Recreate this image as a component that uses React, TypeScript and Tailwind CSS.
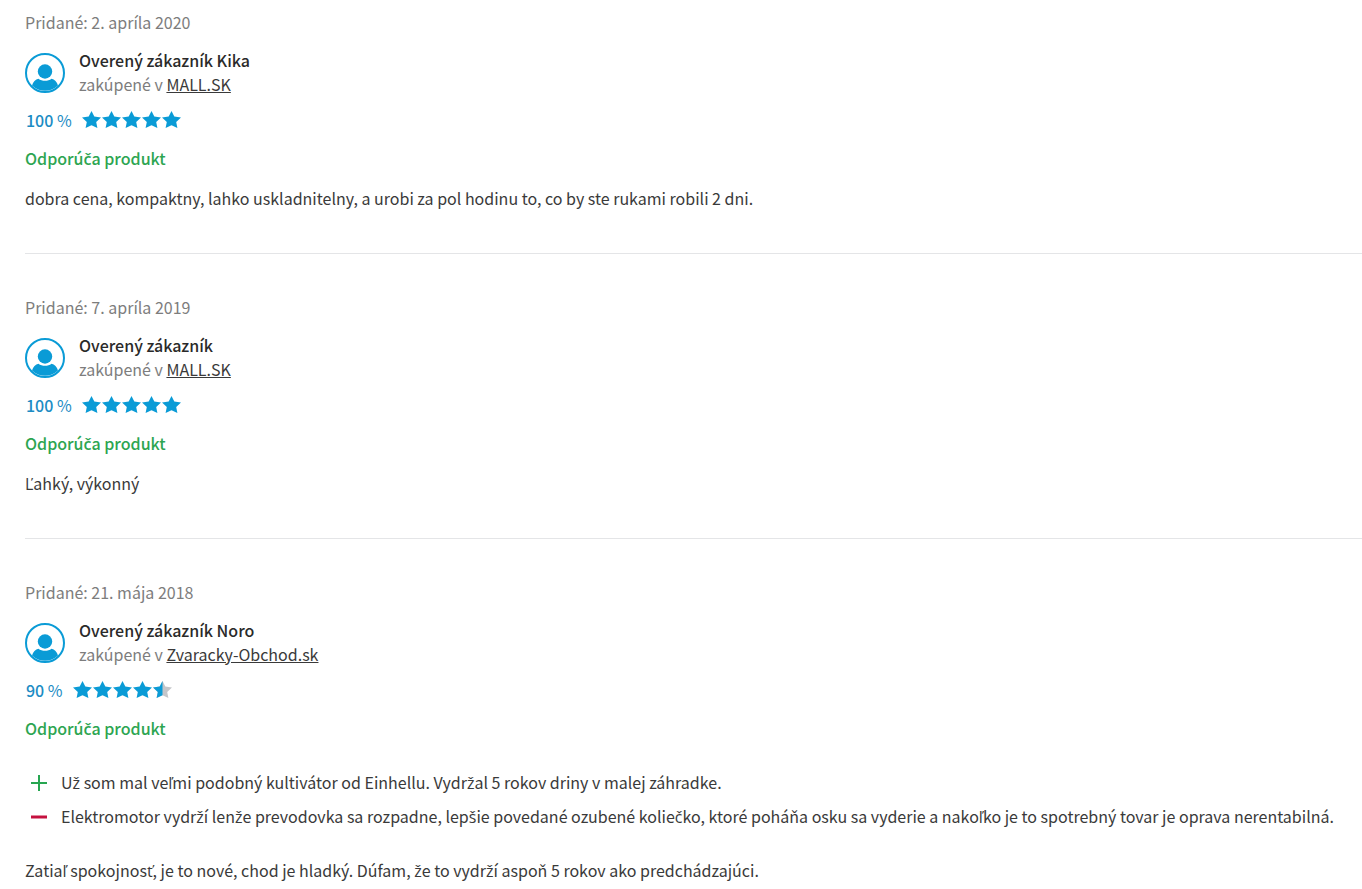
type Review = {
  id: number;
  added: string;
  author: string;
  shop: string;
  rating: number;
  pros?: string[];
  cons?: string[];
  text: string;
};

const reviews: Review[] = [
  {
    id: 1,
    added: "2. apríla 2020",
    author: "Overený zákazník Kika",
    shop: "MALL.SK",
    rating: 100,
    text: "dobra cena, kompaktny, lahko uskladnitelny, a urobi za pol hodinu to, co by ste rukami robili 2 dni.",
  },
  {
    id: 2,
    added: "7. apríla 2019",
    author: "Overený zákazník",
    shop: "MALL.SK",
    rating: 100,
    text: "Ľahký, výkonný",
  },
  {
    id: 3,
    added: "21. mája 2018",
    author: "Overený zákazník Noro",
    shop: "Zvaracky-Obchod.sk",
    rating: 90,
    pros: [
      "Už som mal veľmi podobný kultivátor od Einhellu. Vydržal 5 rokov driny v malej záhradke.",
    ],
    cons: [
      "Elektromotor vydrží lenže prevodovka sa rozpadne, lepšie povedané ozubené koliečko, ktoré poháňa osku sa vyderie a nakoľko je to spotrebný tovar je oprava nerentabilná.",
    ],
    text: "Zatiaľ spokojnosť, je to nové, chod je hladký. Dúfam, že to vydrží aspoň 5 rokov ako predchádzajúci.",
  },
];

const STAR =
  "M9.5 0L12.3 5.6L19 6.5L14.2 10.9L15.4 17L9.5 14.3L3.6 17L4.8 10.9L0 6.5L6.7 5.6Z";
const HALF_STAR = "M9.5 0V14.3L3.6 17L4.8 10.9L0 6.5L6.7 5.6Z";

// the main font has no letters with a caron, so they come from another one
const Text = ({ children, strong }: { children: string; strong?: boolean }) => (
  <>
    {children.split(/([čšžťľĽ])/).map((part, i) =>
      i % 2 ? (
        <span
          key={i}
          className={
            strong
              ? "font-['Open_Sans',sans-serif] leading-none font-semibold"
              : "font-['Open_Sans',sans-serif] leading-none"
          }
        >
          {part}
        </span>
      ) : (
        part
      ),
    )}
  </>
);

const Avatar = () => (
  <svg className="size-10 shrink-0" viewBox="0 0 40 40" aria-hidden="true">
    <circle cx="20" cy="20" r="19" fill="none" stroke="#0a9bd6" strokeWidth="2" />
    <circle cx="20" cy="18.5" r="7.2" fill="#0a9bd6" />
    <path
      d="M7 32.5C8 29 10.5 26.5 13.5 25.8C17 28.5 23 28.5 26.5 25.8C29.5 26.5 32 29 33 32.5C26 39.5 14 39.5 7 32.5Z"
      fill="#0a9bd6"
    />
  </svg>
);

const Stars = ({ rating }: { rating: number }) => (
  <div className="flex gap-px pb-px" role="img" aria-label={`${rating} %`}>
    {[0, 1, 2, 3, 4].map((i) => {
      const half = rating < (i + 1) * 20;

      return (
        <svg key={i} className="h-[17px] w-[19px]" viewBox="0 0 19 17">
          <path d={STAR} fill={half ? "#c4c6ca" : "#0a9bd6"} />
          {half && <path d={HALF_STAR} fill="#0a9bd6" />}
        </svg>
      );
    })}
  </div>
);

const Point = ({ text, positive }: { text: string; positive?: boolean }) => (
  <li className="flex gap-[14px]">
    <svg className="mt-[5px] size-4 shrink-0" viewBox="0 0 16 16" aria-hidden="true">
      {positive ? (
        <path d="M8 0V16M0 8H16" stroke="#27a651" strokeWidth="2" />
      ) : (
        <path d="M0 8H16" stroke="#c5113f" strokeWidth="3" />
      )}
    </svg>
    <span>
      <Text>{text}</Text>
    </span>
  </li>
);

const ReviewItem = ({ review }: { review: Review }) => {
  const { added, author, shop, rating, pros = [], cons = [], text } = review;
  const hasPoints = pros.length + cons.length > 0;

  return (
    <article className="border-b border-[#e4e5e7] pt-[41px] pb-[43px] first:pt-[10px] last:border-b-0 last:pb-1">
      <p className="text-[#7d7d7d]">Pridané: {added}</p>

      <div className="mt-[14px] flex gap-[14px]">
        <div className="pt-[5px]">
          <Avatar />
        </div>
        <div>
          <h3 className="font-medium text-[#2a2a2a]">{author}</h3>
          <p className="text-[#7d7d7d]">
            zakúpené v{" "}
            <a href="#" className="text-[#3a3a3a] underline underline-offset-1">
              {shop}
            </a>
          </p>
        </div>
      </div>

      <div className="mt-3 flex items-center gap-[10px] pl-px">
        <span className="text-[#1c8cc4]">
          <strong className="font-medium">{rating}</strong> %
        </span>
        <Stars rating={rating} />
      </div>

      <p className="mt-[14px] font-medium text-[#2da551]">
        <Text strong>Odporúča produkt</Text>
      </p>

      {hasPoints && (
        <ul className="my-[30px] flex flex-col gap-[10px] pl-[6px]">
          {pros.map((item) => (
            <Point key={item} text={item} positive />
          ))}
          {cons.map((item) => (
            <Point key={item} text={item} />
          ))}
        </ul>
      )}

      <p className={hasPoints ? "" : "mt-4"}>
        <Text>{text}</Text>
      </p>
    </article>
  );
};

export default function App() {
  return (
    <main className="bg-white pl-[25px] font-['Noto_Sans_CJK_SC','Noto_Sans',sans-serif] text-base leading-6 text-[#3a3a3a]">
      {reviews.map((review) => (
        <ReviewItem key={review.id} review={review} />
      ))}
    </main>
  );
}
